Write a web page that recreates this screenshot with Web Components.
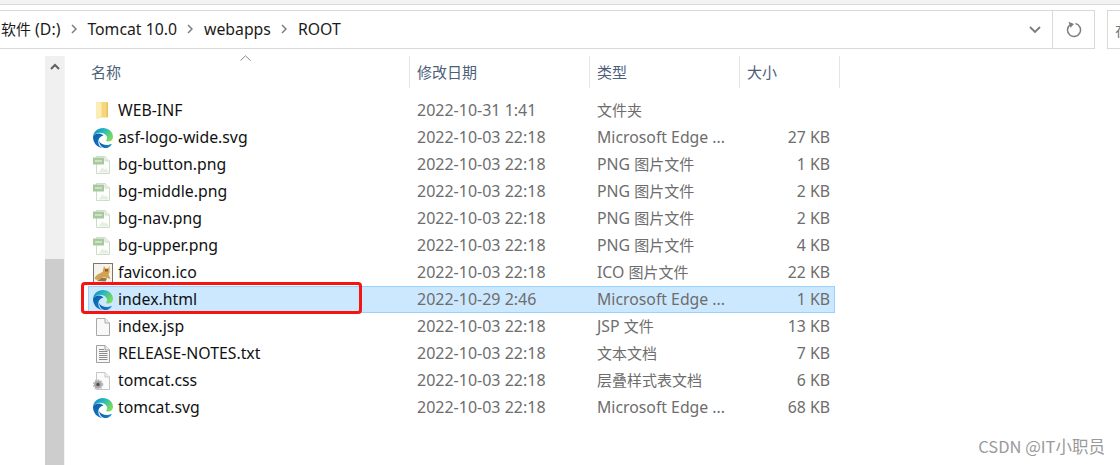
<!DOCTYPE html>
<html><head><meta charset="utf-8">
<style>
html,body{margin:0;padding:0;background:#fff;overflow:hidden}
body{font-family:"Noto Sans","Noto Sans CJK SC",sans-serif}
</style></head><body>
<x-explorer>
  <x-address-bar>
    <x-crumb slot="crumbs"><span><span style="font-size:15px">软件</span> (D:)</span></x-crumb>
    <x-crumb slot="crumbs">Tomcat 10.0</x-crumb>
    <x-crumb slot="crumbs">webapps</x-crumb>
    <x-crumb slot="crumbs" last>ROOT</x-crumb>
  </x-address-bar>
  <x-file-view>
    <x-file-row icon="folder" name="WEB-INF" date="2022-10-31 1:41" type="文件夹"></x-file-row>
    <x-file-row icon="edge" name="asf-logo-wide.svg" date="2022-10-03 22:18" type="Microsoft Edge ..." size="27 KB"></x-file-row>
    <x-file-row icon="png" name="bg-button.png" date="2022-10-03 22:18" type="PNG 图片文件" size="1 KB"></x-file-row>
    <x-file-row icon="png" name="bg-middle.png" date="2022-10-03 22:18" type="PNG 图片文件" size="2 KB"></x-file-row>
    <x-file-row icon="png" name="bg-nav.png" date="2022-10-03 22:18" type="PNG 图片文件" size="2 KB"></x-file-row>
    <x-file-row icon="png" name="bg-upper.png" date="2022-10-03 22:18" type="PNG 图片文件" size="4 KB"></x-file-row>
    <x-file-row icon="ico" name="favicon.ico" date="2022-10-03 22:18" type="ICO 图片文件" size="22 KB"></x-file-row>
    <x-file-row icon="edge" name="index.html" date="2022-10-29 2:46" type="Microsoft Edge ..." size="1 KB" selected></x-file-row>
    <x-file-row icon="blank" name="index.jsp" date="2022-10-03 22:18" type="JSP 文件" size="13 KB"></x-file-row>
    <x-file-row icon="text" name="RELEASE-NOTES.txt" date="2022-10-03 22:18" type="文本文档" size="7 KB"></x-file-row>
    <x-file-row icon="css" name="tomcat.css" date="2022-10-03 22:18" type="层叠样式表文档" size="6 KB"></x-file-row>
    <x-file-row icon="edge" name="tomcat.svg" date="2022-10-03 22:18" type="Microsoft Edge ..." size="68 KB"></x-file-row>
  </x-file-view>
</x-explorer>
<script>
function shadow(el,html){el.attachShadow({mode:'open'}).innerHTML=html;}
let uid=0;
const cjk=s=>s.replace(/[\u4e00-\u9fff]+/g,m=>`<span class="z">${m}</span>`);
const page=(inner,stroke='#b9b9b9',fill='#fafafa')=>`<path d="M3.5 1.500H12L16.500 6V18.500H3.500Z" fill="${fill}" stroke="${stroke}"/><path d="M12 1.500V6H16.500" fill="#eeeeee" stroke="${stroke}"/>${inner}`;
const icons={
folder:()=>`<svg viewBox="0 0 20 20" width="20" height="20"><path d="M3.500 1H15V16.500H8L3.500 18Z" fill="#f5d67c"/><path d="M3.500 1H8.500V15.500L3.500 18Z" fill="#fcedb4"/><path d="M13.500 2H15V16H13.500Z" fill="#e9c258"/></svg>`,
edge:()=>{const a='e'+(++uid);return `<svg viewBox="0 0 24 24" width="20" height="20"><defs>
<linearGradient id="${a}a" x1="0" y1="0" x2="1" y2=".55"><stop offset="0" stop-color="#1580c6"/><stop offset=".45" stop-color="#20b4c6"/><stop offset="1" stop-color="#78dc5c"/></linearGradient>
<linearGradient id="${a}b" x1="0" y1="0" x2=".7" y2="1"><stop offset="0" stop-color="#0d5ea6"/><stop offset="1" stop-color="#0f78c8"/></linearGradient>
<linearGradient id="${a}c" x1="0" y1="0" x2="1" y2="0"><stop offset="0" stop-color="#0b5aa2"/><stop offset="1" stop-color="#1a8bd8"/></linearGradient></defs>
<path d="M12 0C5.500 0 .6 4.600 0 10.600 1.600 7.600 4.900 5.600 8.600 5.600c4.900 0 8.400 3.500 8.400 6.400 0 1.300-.6 2-1.100 2.600-.3.400-.1.900.7 1.200 1.300.5 3.200.5 4.500-.1C22.800 14.600 24 12.700 24 10.400 24 4.400 18.500 0 12 0Z" fill="url(#${a}a)"/>
<path d="M0 10.600C0 17.900 4.800 23.300 11.200 24 8 22.500 6 19.300 6.400 15.600 6.800 12.200 9 9.800 12.500 9.300 10.600 7 8.400 6.200 6.300 6.700 2.900 7.400.7 9 0 10.600Z" fill="url(#${a}b)"/>
<path d="M7.500 15.500C7.500 20.200 11 24 15 24c2.600 0 5.300-1.300 7.200-4 .3-.6-.2-1-.7-.7-1.500.8-3 1.100-4.500 1.100C12.400 20.400 8.700 18.500 7.500 15.500Z" fill="url(#${a}c)"/></svg>`},
png:()=>`<svg viewBox="0 0 20 20" width="20" height="20">${page('<path d="M6 17 9.500 12.500 11.500 14.500 13 13.500 15.500 16.500V17.500H6Z" fill="#e3efe0"/><rect x="0" y="2.500" width="11" height="7" fill="#a8c99c"/><rect x="2" y="5" width="7" height="2" fill="#cfe0c8"/>','#cfdccb','#fdfefc')}</svg>`,
ico:()=>`<svg viewBox="0 0 20 20" width="20" height="20"><rect x=".5" y=".5" width="19" height="19" fill="#f6f3ec" stroke="#7b756c"/><path d="M1.500 15C4 11 7 10.500 9.500 9L11 3 12.500 5.500H15L16.500 3V9L15.500 11.500 17.500 16 14 15 10 14 5 17 2.500 16.500Z" fill="#d2a250"/><path d="M12 6H15V8.500H12Z" fill="#8a6426"/><path d="M4 18 9 14.500 14 15.500 12.500 18.500Z" fill="#8f7545"/></svg>`,
blank:()=>`<svg viewBox="0 0 20 20" width="20" height="20">${page('','#a8a8a8','#f8f8f8')}</svg>`,
text:()=>`<svg viewBox="0 0 20 20" width="20" height="20">${page('<path d="M6 5.500H11M6 7.500H14.500M6 9.500H14.500M6 11.500H14.500M6 13.500H14.500M6 15.500H14.500" stroke="#8d8d8d" stroke-width="1"/>','#a0a0a0','#f7f7f7')}</svg>`,
css:()=>`<svg viewBox="0 0 20 20" width="20" height="20">${page('<circle cx="5" cy="13.500" r="4" fill="#a9a9a9"/><circle cx="5" cy="13.500" r="4.500" fill="none" stroke="#bdbdbd" stroke-width="1.600" stroke-dasharray="1.600 1.300"/><circle cx="5" cy="13.500" r="1.700" fill="#4f4f4f"/>','#c6c6c6','#fbfbfb')}</svg>`
};

customElements.define('x-explorer',class extends HTMLElement{constructor(){super();shadow(this,`<style>
:host{display:flex;flex-direction:column;width:1120px;height:465px;overflow:hidden;background:#fff}
.strip{height:4px;flex:none;background:#f2f3f5;border-bottom:1px solid #d9d9d9}
</style><div class="strip"></div><slot></slot>`)}});

customElements.define('x-crumb',class extends HTMLElement{constructor(){super();shadow(this,`<style>
:host{display:inline-flex;align-items:center;font:15.800px "Noto Sans","Noto Sans CJK SC",sans-serif;color:#1a1a1a;height:100%}
.c{width:27px;display:flex;justify-content:center}
:host([last]) .c{display:none}
</style><slot></slot><span class="c"><svg width="6" height="10" viewBox="0 0 6 10"><path d="M1 1 5 5 1 9" fill="none" stroke="#7d7d7d" stroke-width="1.500"/></svg></span>`)}});

customElements.define('x-address-bar',class extends HTMLElement{constructor(){super();shadow(this,`<style>
:host{display:flex;flex:none;height:39px;margin-top:5px}
.box{display:flex;align-items:center;box-sizing:border-box;height:39px;border:1px solid #d9d9d9;border-left:0}
.main{width:1095px;position:relative}
.crumbs{flex:1;display:flex;align-items:center;height:100%;padding-left:1px;margin-top:-2px}
.drop{width:42px;height:100%;display:flex;align-items:center;justify-content:center;padding-left:8px;box-sizing:border-box}
.ref{width:42px;height:100%;border-left:1px solid #d9d9d9;display:flex;align-items:center;justify-content:center;box-sizing:border-box}
.search{margin-left:12px;flex:1;border-left:1px solid #d9d9d9;border-right:0;padding-left:7px;font:15px "Noto Sans CJK SC",sans-serif;color:#777;overflow:hidden;white-space:nowrap;box-sizing:border-box}
</style>
<div class="box main"><div class="crumbs"><slot name="crumbs"></slot></div>
<div class="drop"><svg width="12" height="8" viewBox="0 0 12 8"><path d="M1 1 6 6 11 1" fill="none" stroke="#7b7b7b" stroke-width="1.800"/></svg></div>
<div class="ref"><svg width="16" height="17" viewBox="0 0 16 17"><path d="M9.500 2.600A6.500 6.500 0 1 1 4 3.800" fill="none" stroke="#7d7d7d" stroke-width="1.500"/><path d="M3 .5 8.500 2.600 5 6.500Z" fill="#7d7d7d" transform="translate(-.5 .3)"/></svg></div></div>
<div class="box search">在</div>`)}});

customElements.define('x-scroll-bar',class extends HTMLElement{constructor(){super();shadow(this,`<style>
:host{display:flex;flex-direction:column;width:19px;background:#f0f0f0;flex:none;border-right:1px solid #f4f4f4}
.up{height:20px;display:flex;justify-content:center;padding-top:7px}
.track{height:176px}
.thumb{flex:1;background:#cdcdcd}
</style><div class="up"><svg width="10" height="7" viewBox="0 0 10 7"><path d="M1 6 5 2 9 6" fill="none" stroke="#606060" stroke-width="2"/></svg></div><div class="track"></div><div class="thumb"></div>`)}});

customElements.define('x-col-head',class extends HTMLElement{constructor(){super();shadow(this,`<style>
:host{display:flex;align-items:flex-start;box-sizing:border-box;height:32px;border-right:1px solid #e5e5e5;padding-left:7px;padding-top:5px;font:15px "Noto Sans CJK SC",sans-serif;color:#4c607a;position:relative}
</style><slot></slot>`)}});

customElements.define('x-file-view',class extends HTMLElement{constructor(){super();shadow(this,`<style>
:host{display:flex;flex:1;min-height:0;margin-top:7px;padding-left:45px}
.pane{flex:1;padding-left:25px;min-width:0}
.head{display:grid;grid-template-columns:320px 180px 150px 100px;width:750px;position:relative}
.sort{position:absolute;left:150px;top:-1px;display:block}
.rows{display:flex;flex-direction:column;width:747px;margin-top:9px;margin-left:-2px}
x-col-head:first-of-type{padding-left:1px}
</style>
<x-scroll-bar></x-scroll-bar>
<div class="pane"><div class="head">
<svg class="sort" width="11" height="6" viewBox="0 0 11 6"><path d="M.5 5.500 5.500 .8 10.500 5.500" fill="none" stroke="#8a8a8a"/></svg>
<x-col-head>名称</x-col-head><x-col-head>修改日期</x-col-head><x-col-head>类型</x-col-head><x-col-head>大小</x-col-head></div>
<div class="rows"><slot></slot></div></div>`)}});

customElements.define('x-file-row',class extends HTMLElement{constructor(){super();
const g=n=>this.getAttribute(n)||'';
shadow(this,`<style>
:host{display:grid;grid-template-columns:322px 180px 150px 1fr;height:27px;box-sizing:border-box;align-items:center;font:15.800px/27px "Noto Sans","Noto Sans CJK SC",sans-serif;color:#6d6d6d;position:relative;white-space:nowrap}
:host([selected]){background:#cce8ff;outline:1px solid #99d1ff;outline-offset:-1px}
.n{display:flex;align-items:center;gap:5px;padding-left:5px;color:#111}
svg{display:block;flex:none}
.z{font-size:15px}
.d{padding-left:7px;font-size:16px}.t{padding-left:7px}.s{text-align:right;padding-right:5px}
.mark{position:absolute;left:-7px;top:-4px;width:281px;height:32px;box-sizing:border-box;border:3px solid #f5140f;border-radius:4px;pointer-events:none}
</style>
<div class="n">${icons[g('icon')]()}<span>${g('name')}</span></div><div class="d">${g('date')}</div><div class="t">${cjk(g('type'))}</div><div class="s">${g('size')}</div>
${this.hasAttribute('selected')?'<div class="mark"></div>':''}`)}});

customElements.define('x-watermark',class extends HTMLElement{constructor(){super();shadow(this,`<style>
:host{position:absolute;right:15px;top:434px;font:16.500px "Noto Sans CJK SC",sans-serif;color:#9a9a9a}
</style><slot></slot>`)}});
</script>
<x-watermark>CSDN @IT小职员</x-watermark>
</body></html>
